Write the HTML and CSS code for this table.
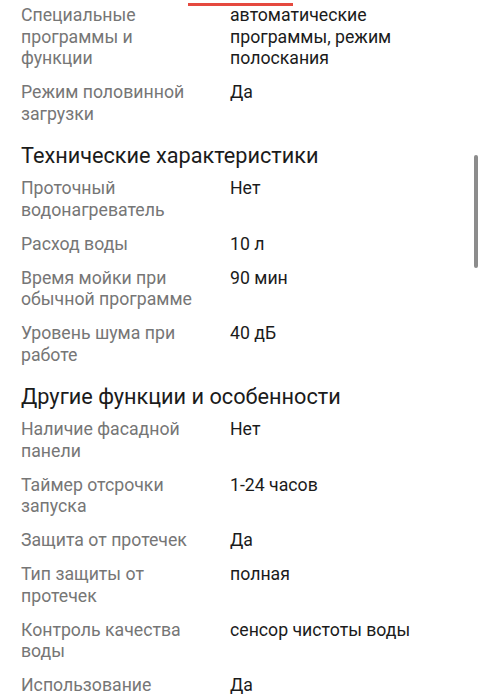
FILE: index.html
```html
<!DOCTYPE html>
<html lang="ru">
<head>
<meta charset="utf-8">
<link rel="stylesheet" href="styles.css">
</head>
<body>
<div class="tab-indicator"></div>
<div class="scrollbar"></div>
<main class="specs">
  <dl class="list">
    <div class="row"><dt>Специальные программы и функции</dt><dd>автоматические программы, режим полоскания</dd></div>
    <div class="row"><dt>Режим половинной загрузки</dt><dd>Да</dd></div>
  </dl>
  <h2 class="heading">Технические характеристики</h2>
  <dl class="list">
    <div class="row"><dt>Проточный водонагреватель</dt><dd>Нет</dd></div>
    <div class="row"><dt>Расход воды</dt><dd>10 л</dd></div>
    <div class="row"><dt>Время мойки при обычной программе</dt><dd>90 мин</dd></div>
    <div class="row"><dt>Уровень шума при работе</dt><dd>40 дБ</dd></div>
  </dl>
  <h2 class="heading">Другие функции и особенности</h2>
  <dl class="list">
    <div class="row"><dt>Наличие фасадной панели</dt><dd>Нет</dd></div>
    <div class="row"><dt>Таймер отсрочки запуска</dt><dd>1-24 часов</dd></div>
    <div class="row"><dt>Защита от протечек</dt><dd>Да</dd></div>
    <div class="row"><dt>Тип защиты от протечек</dt><dd>полная</dd></div>
    <div class="row"><dt>Контроль качества воды</dt><dd>сенсор чистоты воды</dd></div>
    <div class="row"><dt>Использование</dt><dd>Да</dd></div>
  </dl>
</main>
</body>
</html>
```
FILE: styles.css
```css
html, body {
  margin: 0;
  padding: 0;
  background: #ffffff;
  overflow: hidden;
}
body {
  font-family: Roboto, "Noto Sans", sans-serif;
  color: #1b1b1b;
  width: 482px;
  height: 700px;
  position: relative;
}
.tab-indicator {
  position: absolute;
  top: 3px;
  left: 188px;
  width: 105px;
  height: 3px;
  background: #e5493f;
}
.scrollbar {
  position: absolute;
  top: 155px;
  left: 474px;
  width: 4px;
  height: 113px;
  background: #8c8c8c;
  border-radius: 2px;
}
.specs {
  padding: 5px 21px 0 21px;
}
.list {
  margin: 0;
  display: flex;
  flex-direction: column;
  gap: 12.5px;
}
.row {
  display: grid;
  grid-template-columns: 176px 1fr;
  column-gap: 33px;
  font-size: 17.7px;
  line-height: 21.5px;
}
.row dt {
  color: #767676;
  margin: 0;
}
.row dd {
  margin: 0;
  color: #1b1b1b;
}
.heading {
  margin: 16.5px 0 8.5px;
  font-size: 21.7px;
  font-weight: 400;
  line-height: 28px;
  color: #1b1b1b;
}
```
